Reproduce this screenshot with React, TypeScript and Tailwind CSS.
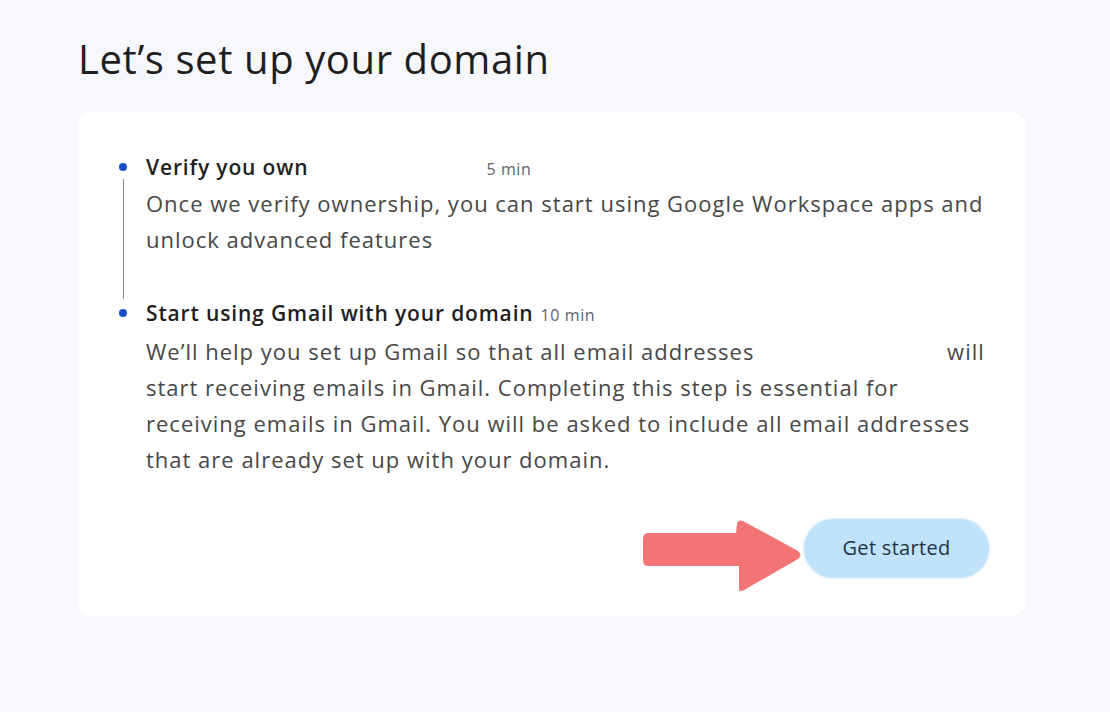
import React from 'react';

interface Step {
  title: string;
  duration: string;
  gap?: boolean;
  lines: React.ReactNode[];
}

const steps: Step[] = [
  {
    title: 'Verify you own',
    duration: '5 min',
    gap: true,
    lines: [
      'Once we verify ownership, you can start using Google Workspace apps and',
      'unlock advanced features',
    ],
  },
  {
    title: 'Start using Gmail with your domain',
    duration: '10 min',
    lines: [
      <>
        We’ll help you set up Gmail so that all email addresses
        <span className="inline-block w-[186px]" /> will
      </>,
      'start receiving emails in Gmail. Completing this step is essential for',
      'receiving emails in Gmail. You will be asked to include all email addresses',
      'that are already set up with your domain.',
    ],
  },
];

const PointerArrow: React.FC = () => (
  <svg
    className="absolute left-[640px] top-[518px] pointer-events-none"
    width="164"
    height="76"
    viewBox="0 0 164 76"
  >
    <path
      d="M8 15 L96 15 L97 6 Q98 1 103 3 L158 33 Q163 37 158 41 L104 72 Q99 75 99 70 L99 48 L8 48 Q3 48 3 42 L3 21 Q3 15 8 15 Z"
      fill="#f27474"
    />
  </svg>
);

const App: React.FC = () => {
  return (
    <div
      className="relative min-h-[712px] w-full bg-[#f7f8fc] pl-[78px] pt-[33px]"
      style={{ fontFamily: '"Open Sans", "Noto Sans", sans-serif' }}
    >
      <h1 className="text-[40px] leading-[52px] text-[#1f1f1f] tracking-[0.6px]">
        Let’s set up your domain
      </h1>

      <div className="mt-[27px] w-[947px] rounded-[14px] bg-white pl-[40px] pr-[30px] pt-[41px] pb-[38px]">
        {steps.map((step, i) => {
          const last = i === steps.length - 1;
          return (
            <div key={step.title} className="flex">
              <div className="flex w-[10px] flex-col items-center pt-[10px] mr-[18px]">
                <span className="h-[8px] w-[8px] rounded-full bg-[#1b4fc7]" />
                {!last && <span className="mt-[8px] w-px flex-1 bg-[#8a8a8a]" />}
              </div>
              <div className={last ? '' : 'pb-[41px]'}>
                <div className="flex items-baseline h-[30px] leading-[30px] mt-[-1px]">
                  <span className="text-[21px] font-semibold tracking-[0.85px] text-[#1f1f1f]">
                    {step.title}
                  </span>
                  {step.gap && <span className="inline-block w-[171px]" />}
                  <span className="ml-[7px] text-[16px] tracking-[0.6px] text-[#5f6368]">
                    {step.duration}
                  </span>
                </div>
                <p
                  className={`${last ? 'mt-[5px]' : 'mt-[3px]'} text-[22px] leading-[36.3px] tracking-[1px] text-[#474747]`}
                >
                  {step.lines.map((line, j) => (
                    <React.Fragment key={j}>
                      {line}
                      {j < step.lines.length - 1 && <br />}
                    </React.Fragment>
                  ))}
                </p>
              </div>
            </div>
          );
        })}

        <div className="mt-[41px] flex justify-end pr-[6px]">
          <button className="h-[59px] w-[185px] rounded-full bg-[#c0e3fb] text-[20px] tracking-[0.3px] text-[#1d3447] shadow-[0_0_3px_rgba(150,200,240,0.6)]">
            Get started
          </button>
        </div>
      </div>

      <PointerArrow />
    </div>
  );
};

export default App;
